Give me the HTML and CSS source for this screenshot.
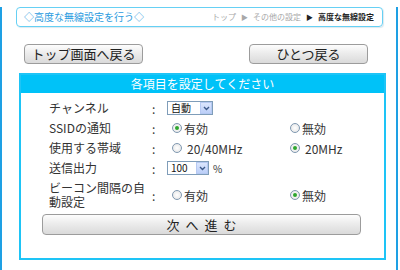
FILE: index.html
```html
<!DOCTYPE html>
<html lang="ja">
<head>
<meta charset="utf-8">
<link rel="stylesheet" href="styles.css">
</head>
<body>
<div class="frame">
  <div class="header">
    <span class="title">◇高度な無線設定を行う◇</span>
    <span class="crumbs"><span>トップ</span><span class="arr">▶</span><span>その他の設定</span><span class="arr cur">▶</span><span class="cur">高度な無線設定</span></span>
  </div>
  <div class="navrow">
    <button class="btn btn-nav">トップ画面へ戻る</button>
    <button class="btn btn-nav">ひとつ戻る</button>
  </div>
  <div class="panel">
    <div class="panel-head">各項目を設定してください</div>
    <div class="form">
      <div class="row">
        <span class="label">チャンネル</span><span class="colon">:</span>
        <span class="sel sel-ch"><span class="sel-text">自動</span><span class="sel-btn"><svg width="7" height="5" viewBox="0 0 7 5"><path d="M1 1 L3.5 3.5 L6 1" fill="none" stroke="#3d5a8a" stroke-width="1.4"/></svg></span></span>
      </div>
      <div class="row">
        <span class="label">SSIDの通知</span><span class="colon">:</span>
        <span class="opt opt1"><span class="radio on"></span>有効</span>
        <span class="opt"><span class="radio"></span>無効</span>
      </div>
      <div class="row">
        <span class="label">使用する帯域</span><span class="colon">:</span>
        <span class="opt opt1"><span class="radio sp"></span>20/40MHz</span>
        <span class="opt"><span class="radio on sp"></span>20MHz</span>
      </div>
      <div class="row">
        <span class="label">送信出力</span><span class="colon">:</span>
        <span class="sel sel-pw"><span class="sel-text">100</span><span class="sel-btn"><svg width="7" height="5" viewBox="0 0 7 5"><path d="M1 1 L3.5 3.5 L6 1" fill="none" stroke="#3d5a8a" stroke-width="1.4"/></svg></span></span>
        <span class="unit">%</span>
      </div>
      <div class="row row-tall">
        <span class="label">ビーコン間隔の自動設定</span><span class="colon">:</span>
        <span class="opt opt1"><span class="radio"></span>有効</span>
        <span class="opt"><span class="radio on"></span>無効</span>
      </div>
    </div>
    <button class="btn btn-next">次へ進む</button>
  </div>
</div>
</body>
</html>
```

FILE: styles.css
```css
body {
  margin: 0;
  font-family: "Noto Sans CJK JP", "Noto Sans", sans-serif;
  color: #333;
  background: #fff;
}
.frame {
  width: 398px;
  height: 268px;
  box-sizing: border-box;
  border: 2px solid #1ea0e4;
  border-top: none;
}
.header {
  box-sizing: border-box;
  width: 367px;
  height: 20px;
  margin: 7px 0 0 14px;
  border: 1px solid #66d0f4;
  border-radius: 4px;
  display: flex;
  align-items: center;
  justify-content: space-between;
  padding: 0 8px 0 7px;
  box-shadow: 1px 1px 1px #dde9ef;
}
.title {
  font-size: 10px;
  color: #2a9be0;
  line-height: 1;
}
.crumbs {
  font-size: 8px;
  color: #a8a8a8;
  display: flex;
  align-items: center;
  line-height: 1;
}
.arr {
  font-size: 7px;
  margin: 0 5px;
}
.cur {
  color: #222;
  font-weight: bold;
}
.navrow {
  display: flex;
  gap: 106px;
  margin: 17px 0 0 22px;
}
.btn {
  box-sizing: border-box;
  border: 1px solid #9c9c9c;
  border-radius: 4px;
  background: linear-gradient(#fdfdfd, #ececec 45%, #dadada);
  font-family: inherit;
  color: #222;
  padding: 0;
}
.btn-nav {
  width: 119px;
  height: 20px;
  font-size: 13px;
  line-height: 18px;
}
.panel {
  box-sizing: border-box;
  width: 367px;
  height: 187px;
  margin: 9px 0 0 17px;
  border: 2px solid #1ec4f6;
  display: flex;
  flex-direction: column;
}
.panel-head {
  height: 18px;
  background: #00c2f8;
  color: #fff;
  font-size: 12px;
  text-align: center;
  line-height: 18px;
}
.form {
  padding: 5px 0 0 28px;
}
.row {
  display: flex;
  align-items: center;
  height: 20px;
  font-size: 12px;
}
.row-tall {
  height: 34px;
}
.label {
  width: 101px;
  line-height: 14px;
}
.colon {
  width: 17px;
  padding-left: 2px;
  box-sizing: border-box;
}
.opt {
  display: flex;
  align-items: center;
}
.opt1 {
  width: 118px;
  margin-left: 5px;
}
.radio {
  width: 10px;
  height: 10px;
  box-sizing: border-box;
  border: 1px solid #7f98b0;
  border-radius: 50%;
  background: radial-gradient(#ffffff, #e2e2e2);
  margin-right: 2px;
  display: flex;
  align-items: center;
  justify-content: center;
}
.radio.sp {
  margin-right: 5px;
}
.radio.on::after {
  content: "";
  width: 4px;
  height: 4px;
  border-radius: 50%;
  background: #2ea62e;
}
.sel {
  display: flex;
  align-items: center;
  justify-content: space-between;
  height: 14px;
  box-sizing: border-box;
  border: 1px solid #7f9db9;
  background: #fff;
  font-size: 10px;
  color: #111;
}
.sel-ch {
  width: 46px;
}
.sel-pw {
  width: 42px;
}
.sel-text {
  padding-left: 3px;
  line-height: 1;
}
.sel-btn {
  width: 12px;
  height: 12px;
  box-sizing: border-box;
  background: linear-gradient(#dbe6fd, #bccff8);
  border: 1px solid #b6c9f2;
  display: flex;
  align-items: center;
  justify-content: center;
}
.unit {
  font-size: 10px;
  margin-left: 4px;
}
.btn-next {
  width: 319px;
  height: 21px;
  margin: 2px 0 0 21px;
  font-size: 13px;
  line-height: 19px;
  letter-spacing: 6px;
  padding-left: 6px;
}
```
